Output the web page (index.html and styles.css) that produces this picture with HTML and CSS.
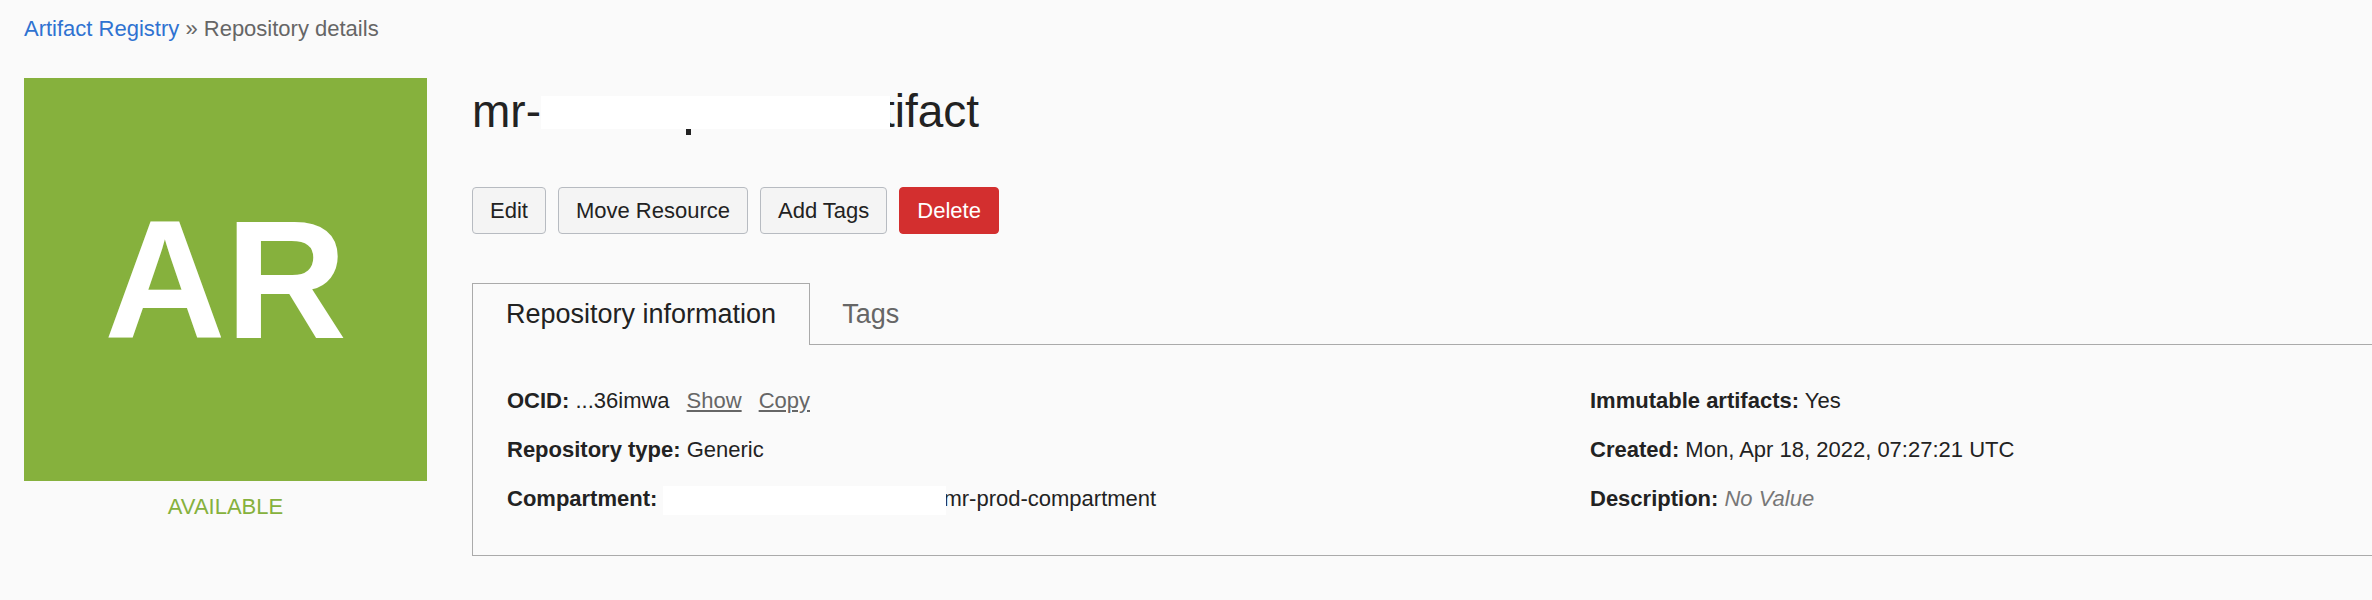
FILE: index.html
```html
<!DOCTYPE html>
<html lang="en">
<head>
<meta charset="utf-8">
<title>Repository details</title>
<link rel="stylesheet" href="styles.css">
</head>
<body>
<div class="page">
  <nav class="crumbs"><a class="crumb-link" href="#">Artifact Registry</a> <span class="sep">»</span> <span class="crumb-current">Repository details</span></nav>
  <div class="main">
    <aside class="side">
      <div class="avatar">AR</div>
      <div class="status">AVAILABLE</div>
    </aside>
    <section class="content">
      <h1 class="title">mr-<span class="redact redact-title"></span>tifact</h1>
      <div class="actions">
        <button class="btn">Edit</button>
        <button class="btn">Move Resource</button>
        <button class="btn">Add Tags</button>
        <button class="btn btn-danger">Delete</button>
      </div>
      <div class="tabs">
        <div class="tab tab-active">Repository information</div>
        <div class="tab">Tags</div>
      </div>
      <div class="panel">
        <div class="col">
          <div class="row"><span class="label">OCID:</span> ...36imwa<a class="link" href="#">Show</a><a class="link" href="#">Copy</a></div>
          <div class="row"><span class="label">Repository type:</span> Generic</div>
          <div class="row"><span class="label">Compartment:</span> <span class="redact redact-comp"></span>mr-prod-compartment</div>
        </div>
        <div class="col">
          <div class="row"><span class="label">Immutable artifacts:</span> Yes</div>
          <div class="row"><span class="label">Created:</span> Mon, Apr 18, 2022, 07:27:21 UTC</div>
          <div class="row"><span class="label">Description:</span> <span class="muted">No Value</span></div>
        </div>
      </div>
    </section>
  </div>
</div>
</body>
</html>
```
FILE: styles.css
```css
html, body {
  margin: 0;
  background: #fafafa;
}
body {
  font-family: "Liberation Sans", Arial, Helvetica, sans-serif;
  font-size: 22px;
  color: #222;
  overflow: hidden;
}
.page {
  padding: 14px 0 0 24px;
}
.crumbs {
  height: 30px;
  line-height: 30px;
  white-space: nowrap;
}
.crumb-link {
  color: #2f72d1;
  text-decoration: none;
}
.sep, .crumb-current {
  color: #666;
}
.main {
  display: flex;
  align-items: flex-start;
  margin-top: 34px;
}
.side {
  width: 403px;
  flex: none;
  display: flex;
  flex-direction: column;
  align-items: center;
}
.avatar {
  width: 403px;
  height: 403px;
  background: #86b13d;
  color: #fff;
  font-weight: bold;
  font-size: 168px;
  line-height: 1;
  display: flex;
  align-items: center;
  justify-content: center;
}
.status {
  margin-top: 11px;
  line-height: 30px;
  color: #86b13d;
}
.content {
  flex: 1;
  min-width: 0;
  margin-left: 45px;
}
.title {
  margin: 0;
  padding-top: 5px;
  font-size: 46px;
  line-height: 56px;
  font-weight: normal;
  color: #222;
  white-space: nowrap;
}
.redact {
  display: inline-block;
  background: #fff;
  position: relative;
  z-index: 1;
}
.redact-title {
  width: 349px;
  height: 33px;
  vertical-align: -2px;
  margin-right: -8px;
}
.redact-title::after {
  content: "";
  position: absolute;
  left: 145px;
  top: 100%;
  width: 5px;
  height: 6px;
  background: #222;
}
.actions {
  display: flex;
  gap: 12px;
  margin-top: 48px;
}
.btn {
  font: inherit;
  font-size: 22px;
  height: 47px;
  line-height: 45px;
  padding: 0 17px;
  border: 1px solid #b7bbc1;
  border-radius: 4px;
  background: #f4f4f4;
  color: #222;
}
.btn-danger {
  background: #d32f2f;
  border-color: #d32f2f;
  color: #fff;
}
.tabs {
  display: flex;
  margin-top: 49px;
  border-bottom: 1px solid #aaa;
}
.tab {
  height: 60px;
  line-height: 60px;
  font-size: 27px;
  padding: 0 33px 1px;
  border: 1px solid transparent;
  border-bottom: none;
  margin-bottom: -1px;
  color: #666;
  white-space: nowrap;
}
.tab + .tab {
  padding-left: 32px;
  border-left: none;
}
.tab-active {
  color: #222;
  border-color: #aaa;
  background: #fafafa;
}
.panel {
  display: grid;
  grid-template-columns: 1083px 1fr;
  border-left: 1px solid #aaa;
  border-bottom: 1px solid #aaa;
  padding: 31px 34px 32px;
}
.row {
  line-height: 49px;
  white-space: nowrap;
}
.label {
  font-weight: bold;
}
.link {
  color: #666;
  text-decoration: underline;
  margin-left: 17px;
}
.muted {
  color: #777;
  font-style: italic;
}
.redact-comp {
  width: 283px;
  height: 29px;
  vertical-align: -9px;
  margin-right: -3px;
}
```
